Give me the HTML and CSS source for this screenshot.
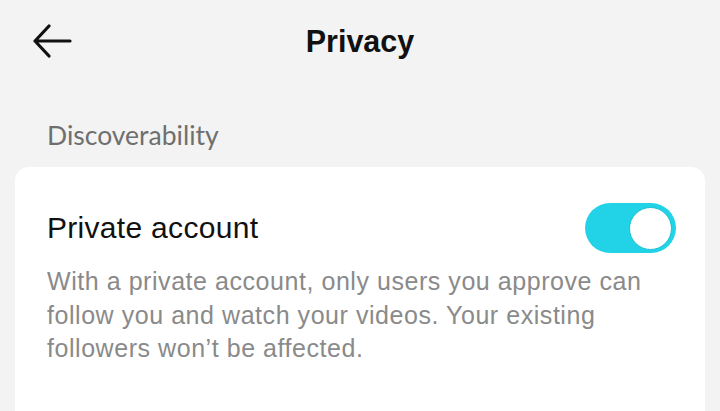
FILE: index.html
```html
<!DOCTYPE html>
<html lang="en">
<head>
<meta charset="utf-8">
<title>Privacy</title>
<link rel="stylesheet" href="styles.css">
</head>
<body>
<div class="screen">
  <header class="topbar">
    <button class="back" aria-label="Back">
      <svg width="40" height="34" viewBox="0 0 40 34" fill="none" stroke="#111" stroke-width="3.2" stroke-linecap="round" stroke-linejoin="round">
        <path d="M3 17 H38 M17 2 L3 17 L17 32"/>
      </svg>
    </button>
    <h1 class="title">Privacy</h1>
    <span class="spacer"></span>
  </header>
  <div class="section-label">Discoverability</div>
  <section class="card">
    <div class="row">
      <span class="row-title">Private account</span>
      <span class="toggle is-on"><span class="knob"></span></span>
    </div>
    <p class="desc">With a private account, only users you approve can follow you and watch your videos. Your existing followers won’t be affected.</p>
  </section>
</div>
</body>
</html>
```
FILE: styles.css
```css
* { box-sizing: border-box; }
html, body { margin: 0; padding: 0; }
body {
  background: #f3f3f3;
  font-family: "Liberation Sans", Arial, sans-serif;
  color: #111;
  width: 720px;
  height: 411px;
  overflow: hidden;
}
.screen { display: flex; flex-direction: column; height: 411px; }
.topbar {
  height: 82px;
  display: grid;
  grid-template-columns: 1fr auto 1fr;
  align-items: center;
  padding: 0 32px;
}
.back {
  background: none;
  border: 0;
  padding: 0;
  margin: 0;
  width: 40px;
  height: 34px;
  display: flex;
  justify-self: start;
  cursor: pointer;
}
.title {
  margin: 0;
  font-size: 30.5px;
  font-weight: 700;
  color: #111;
}
.section-label {
  padding: 37px 0 0 47px;
  font-family: Lato, "Liberation Sans", sans-serif;
  font-size: 26.5px;
  line-height: 32px;
  color: #6f6f6f;
  height: 85px;
}
.card {
  flex: 1;
  margin: 0 15px;
  background: #fff;
  border-radius: 14px 14px 0 0;
  padding: 36px 29px 0 32px;
}
.row {
  display: flex;
  align-items: center;
  justify-content: space-between;
  height: 50px;
}
.row-title {
  font-size: 30px;
  letter-spacing: 0.3px;
  color: #111;
}
.toggle {
  width: 91px;
  height: 50px;
  border-radius: 25px;
  background: #22d2e6;
  display: flex;
  align-items: center;
  justify-content: flex-end;
  padding: 0 4px;
}
.knob {
  width: 43px;
  height: 43px;
  border-radius: 50%;
  background: #fff;
  border: 1.5px solid #1cbfd2;
}
.desc {
  margin: 12px 0 0;
  font-size: 25px;
  letter-spacing: 0.55px;
  line-height: 33.5px;
  color: #8a8a8a;
}
```
